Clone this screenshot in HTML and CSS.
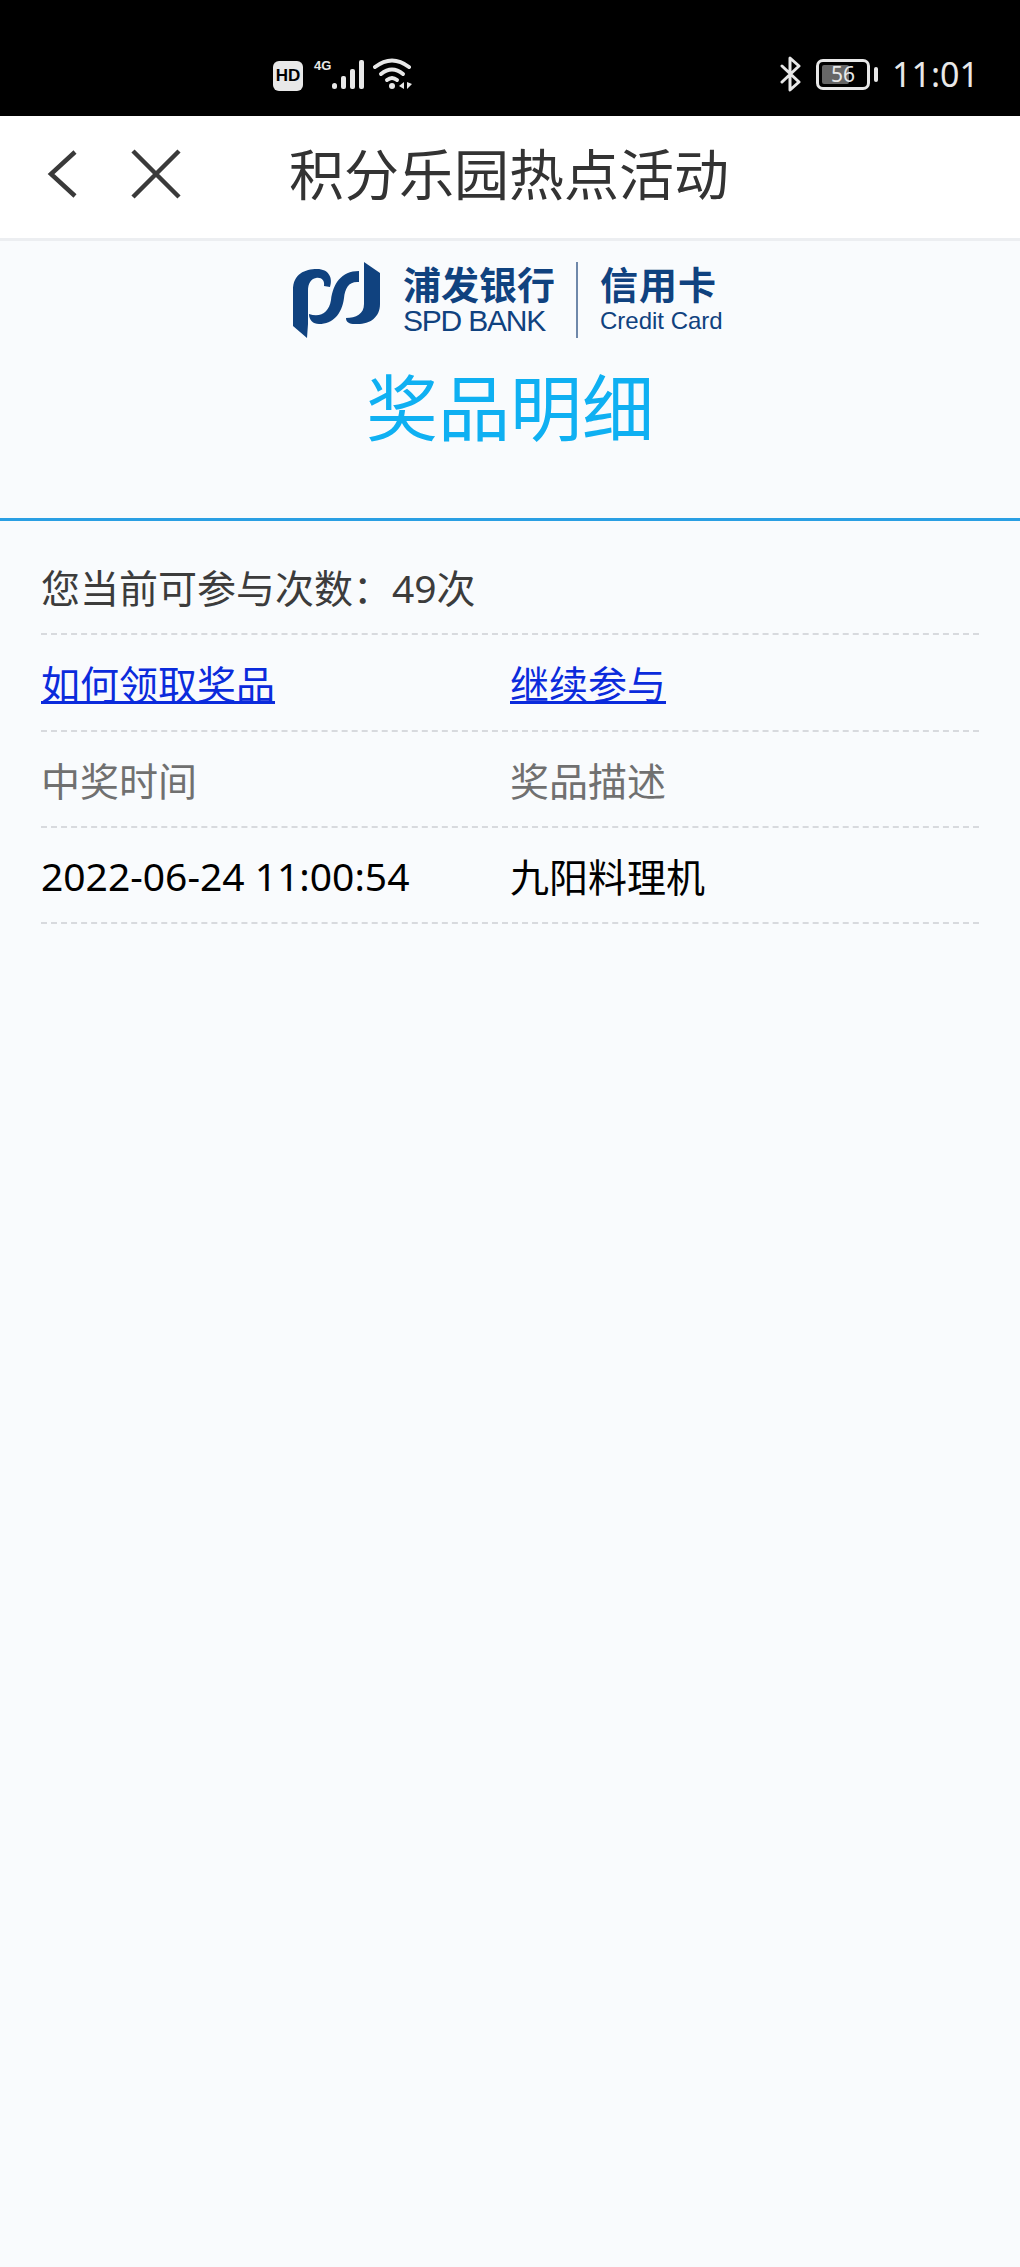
FILE: index.html
```html
<!DOCTYPE html>
<html lang="zh-CN">
<head>
    <meta charset="UTF-8">
    <meta name="viewport" content="width=device-width, initial-scale=1.0">
    <title>积分乐园热点活动</title>
    <link rel="stylesheet" href="styles.css">
</head>
<body>
    <div class="status-bar">
        <div class="status-left">
            <span class="hd-badge">HD</span>
            <span class="net-label">4G</span>
            <svg class="signal" width="38" height="32" viewBox="0 0 38 32">
                <rect x="1" y="24" width="5" height="6" rx="2.5" fill="#e8e8e8"/>
                <rect x="10" y="17" width="5" height="13" rx="2" fill="#e8e8e8"/>
                <rect x="19" y="10" width="5" height="20" rx="2" fill="#e8e8e8"/>
                <rect x="28" y="1" width="5" height="29" rx="2" fill="#e8e8e8"/>
            </svg>
            <svg class="wifi" width="42" height="34" viewBox="0 0 42 34">
                <path d="M2 10 Q19 -3 36 10" fill="none" stroke="#e8e8e8" stroke-width="4" stroke-linecap="round"/>
                <path d="M8 17 Q19 8 30 17" fill="none" stroke="#e8e8e8" stroke-width="4" stroke-linecap="round"/>
                <path d="M14 23 Q19 19 24 23" fill="none" stroke="#e8e8e8" stroke-width="4" stroke-linecap="round"/>
                <circle cx="19" cy="29" r="3" fill="#e8e8e8"/>
                <path d="M31 25v7l-5-3z M34 25v7l5-5z" fill="#e8e8e8"/>
            </svg>
        </div>
        <div class="status-right">
            <svg class="bt" width="24" height="36" viewBox="0 0 24 36">
                <path d="M3 10 L20 26 L11 34 V2 L20 10 L3 26" fill="none" stroke="#e8e8e8" stroke-width="3" stroke-linejoin="round" stroke-linecap="round"/>
            </svg>
            <div class="battery">
                <div class="battery-box">
                    <span class="battery-fill"></span>
                    <span class="battery-num">56</span>
                </div>
                <span class="battery-tip"></span>
            </div>
            <span class="clock">11:01</span>
        </div>
    </div>

    <div class="nav-bar">
        <svg class="nav-back" width="34" height="50" viewBox="0 0 34 50">
            <path d="M29 3 L5 25 L29 47" fill="none" stroke="#3a3a3a" stroke-width="4.5"/>
        </svg>
        <svg class="nav-close" width="52" height="52" viewBox="0 0 52 52">
            <path d="M3 3 L49 49 M49 3 L3 49" fill="none" stroke="#3a3a3a" stroke-width="4.5"/>
        </svg>
        <h1 class="nav-title">积分乐园热点活动</h1>
    </div>

    <div class="logo-row">
        <div class="logo">
            <svg class="logo-mark" width="88" height="76" viewBox="0 0 88 76">
                <path d="M0 28 C0 12 12 7 24 7 C36 7 40 16 37 25 L31 24 C32 18 28 15 23 16 C18 17 15 21 15 29 V62 L14 76 L0 64 Z" fill="#10427f"/>
                <path d="M16 52 C28 56 36 50 38 38 C40 22 48 9 66 9 V20 C56 19 52 26 51 36 C49 52 40 62 26 62 C20 62 16 58 16 52 Z" fill="#10427f"/>
                <path d="M53 56 C63 56 71 52 71 42 V0 L87 11 V42 C87 56 76 63 62 62 C56 62 53 60 53 56 Z" fill="#10427f"/>
            </svg>
            <div class="logo-bank">
                <span class="logo-cn">浦发银行</span>
                <span class="logo-en">SPD BANK</span>
            </div>
            <span class="logo-divider"></span>
            <div class="logo-card">
                <span class="logo-cn">信用卡</span>
                <span class="logo-en-small">Credit Card</span>
            </div>
        </div>
    </div>

    <h2 class="page-title">奖品明细</h2>

    <div class="content">
        <div class="row row-chance">您当前可参与次数：49次</div>
        <div class="row">
            <a class="cell link" href="#">如何领取奖品</a>
            <a class="cell link" href="#">继续参与</a>
        </div>
        <div class="row row-head">
            <span class="cell">中奖时间</span>
            <span class="cell">奖品描述</span>
        </div>
        <div class="row row-item">
            <span class="cell">2022-06-24 11:00:54</span>
            <span class="cell">九阳料理机</span>
        </div>
    </div>
</body>
</html>
```

FILE: styles.css
```css
* {
    box-sizing: border-box;
}

body {
    margin: 0;
    padding: 0;
    min-height: 2267px;
    background: #f9fbfd;
    font-family: 'Noto Sans', 'Noto Sans CJK SC', sans-serif;
}

.status-bar {
    height: 116px;
    background: #000;
    color: #e8e8e8;
    display: flex;
    align-items: flex-start;
    justify-content: space-between;
    padding: 56px 41px 0 273px;
}

.status-left {
    display: flex;
    align-items: flex-start;
}

.hd-badge {
    width: 30px;
    height: 30px;
    margin-top: 5px;
    background: #e8e8e8;
    border-radius: 6px;
    color: #000;
    font-size: 17px;
    font-weight: 700;
    line-height: 30px;
    text-align: center;
    font-family: 'Liberation Sans', sans-serif;
}

.net-label {
    margin: 2px 0 0 11px;
    width: 18px;
    font-size: 13px;
    font-weight: 700;
    line-height: 16px;
    font-family: 'Liberation Sans', sans-serif;
}

.signal {
    margin: 3px 0 0 -1px;
}

.wifi {
    margin: 1px 0 0 4px;
}

.status-right {
    display: flex;
    align-items: center;
    margin-top: -2px;
}

.bt {
    margin-right: 13px;
}

.battery {
    display: flex;
    align-items: center;
    margin-right: 14px;
}

.battery-box {
    position: relative;
    width: 54px;
    height: 31px;
    border: 3px solid #e8e8e8;
    border-radius: 7px;
}

.battery-fill {
    position: absolute;
    left: 3px;
    top: 3px;
    bottom: 3px;
    width: 27px;
    background: #666;
    border-radius: 2px;
}

.battery-num {
    position: absolute;
    left: 0;
    right: 0;
    top: 0;
    font-size: 21px;
    line-height: 25px;
    text-align: center;
    color: #e8e8e8;
}

.battery-tip {
    width: 4px;
    height: 15px;
    margin-left: 4px;
    background: #e8e8e8;
    border-radius: 2px;
}

.clock {
    font-size: 34px;
    line-height: 40px;
    color: #e8e8e8;
}

.nav-bar {
    height: 125px;
    background: #fff;
    border-bottom: 3px solid #eceef1;
    display: flex;
    align-items: center;
    padding: 0 0 6px 46px;
}

.nav-back {
    flex: none;
}

.nav-close {
    flex: none;
    margin-left: 50px;
}

.nav-title {
    margin: 0 0 0 107px;
    font-size: 55px;
    font-weight: 400;
    line-height: 70px;
    color: #333;
}

.logo-row {
    display: flex;
    justify-content: center;
    padding-top: 21px;
}

.logo {
    display: flex;
    align-items: center;
    width: 434px;
    height: 76px;
    color: #10427f;
}

.logo-mark {
    flex: none;
}

.logo-bank {
    margin-left: 22px;
    width: 155px;
}

.logo-cn {
    display: block;
    font-size: 38px;
    font-weight: 700;
    line-height: 42px;
    white-space: nowrap;
}

.logo-en {
    display: block;
    font-size: 30px;
    line-height: 32px;
    letter-spacing: -1.2px;
    white-space: nowrap;
    font-family: 'Liberation Sans', sans-serif;
}

.logo-divider {
    flex: none;
    width: 2px;
    height: 76px;
    margin: 0 22px 0 18px;
    background: #6f88aa;
}

.logo-card .logo-cn {
    font-size: 38px;
    letter-spacing: 1px;
}

.logo-en-small {
    display: block;
    font-size: 24px;
    line-height: 32px;
    white-space: nowrap;
    font-family: 'Liberation Sans', sans-serif;
}

.page-title {
    margin: 0;
    padding-top: 19px;
    height: 183px;
    border-bottom: 3px solid #2a9fe3;
    font-size: 72px;
    font-weight: 400;
    line-height: 100px;
    text-align: center;
    color: #0fb0f2;
}

.content {
    padding: 18px 41px 0;
}

.row {
    display: flex;
    align-items: center;
    height: 96.3px;
    border-bottom: 2px dashed #d8dade;
    font-size: 39px;
}

.row-chance {
    color: #3c3c3c;
}

.row-head {
    color: #707070;
}

.row-item {
    color: #000;
}

.cell {
    width: 469px;
    flex: none;
}

.link {
    color: #0b2bdc;
}

.link:last-child {
    width: auto;
}
```
